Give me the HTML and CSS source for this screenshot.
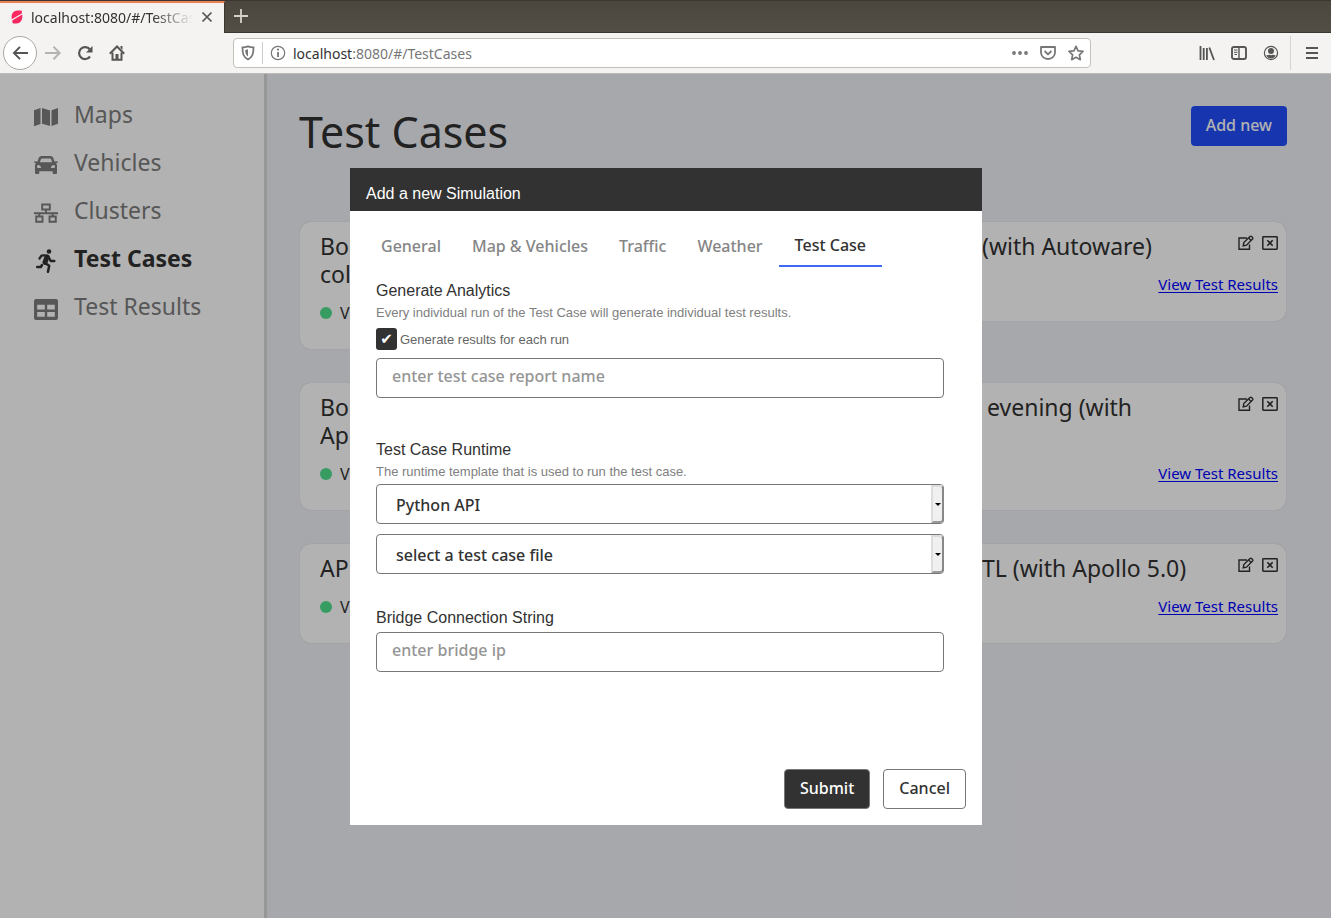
FILE: index.html
```html
<!DOCTYPE html>
<html lang="en">
<head>
<meta charset="utf-8">
<title>Test Cases</title>
<link rel="stylesheet" href="styles.css">
</head>
<body>
<svg class="defs" aria-hidden="true">
  <symbol id="edit" viewBox="0 0 18 16"><g fill="none" stroke="currentColor" stroke-width="1.4"><path d="M10 3H2v11.300h10.500V9.500"/><path d="M6.200 10.800l.6-3.300L13 1.500q.8-.7 1.600 0l.9.900q.7.800 0 1.600L9.500 10.200z"/><path d="M11.600 3l2.500 2.500"/></g></symbol>
  <symbol id="remove" viewBox="0 0 16 16"><rect x=".8" y="1.800" width="14.400" height="12.400" rx=".6" fill="none" stroke="currentColor" stroke-width="1.500"/><path d="M5.300 5.300l5.400 5.400M10.700 5.300l-5.400 5.400" fill="none" stroke="currentColor" stroke-width="1.600"/></symbol>
</svg>
<header class="browser">
  <div class="tabstrip">
    <div class="browser-tab">
      <svg class="favicon" viewBox="0 0 12 16"><path d="M.8 10.200C0 5 2 1.500 6.500 1.500q2.500-.3 4.500.3L10.800 4.500z" fill="#ff2a62"/><path d="M11.200 5.600C12 10 10 14.500 5.500 14.500q-2 .3-3.800-.3L1.200 11.600z" fill="#f5275f"/></svg>
      <span class="tab-title">localhost:8080/#/TestCases</span>
      <button class="icon-button close" aria-label="Close tab"><svg viewBox="0 0 12 12"><path d="M1.500 1.500l9 9M10.500 1.500l-9 9" fill="none" stroke="#555" stroke-width="1.700"/></svg></button>
    </div>
    <button class="icon-button plus" aria-label="New tab"><svg viewBox="0 0 14 14"><path d="M7 0v14M0 7h14" stroke="#d5d2cd" stroke-width="1.800"/></svg></button>
  </div>
  <div class="toolbar">
    <button class="icon-button back" aria-label="Back"><svg viewBox="0 0 18 16"><path d="M17 8H2M8.500 1.500L2 8l6.500 6.500" fill="none" stroke="#555" stroke-width="2"/></svg></button>
    <button class="icon-button nav" aria-label="Forward"><svg viewBox="0 0 16 16"><path d="M0 8h14.500M8.500 1.800L14.700 8l-6.200 6.200" fill="none" stroke="#b5b3b0" stroke-width="2"/></svg></button>
    <button class="icon-button nav" aria-label="Reload"><svg viewBox="0 0 16 16"><path d="M13 11.500A6 6 0 1 1 12.800 4.300" fill="none" stroke="#555" stroke-width="2.200"/><path d="M15.500 1v6.500H9z" fill="#555"/></svg></button>
    <button class="icon-button nav" aria-label="Home"><svg viewBox="0 0 16 16"><path d="M.8 8.700L8 1.500l7.200 7.200" fill="none" stroke="#555" stroke-width="2"/><path d="M3.500 7.500v7.300h9V7.500" fill="none" stroke="#555" stroke-width="2"/><path d="M6.500 15V9h3v6zM11.500 1h2v4l-2-2z" fill="#555"/></svg></button>
    <div class="address">
      <svg class="shield" viewBox="0 0 14 16"><path d="M7 1.400c2 .8 4 1 5.500 1C12.500 9 11.500 12 7 14.500 2.500 12 1.500 9 1.500 2.400c1.500 0 3.500-.2 5.500-1z" fill="none" stroke="#777" stroke-width="1.800"/><path d="M7 4.300v7.300C4.700 9.800 4.300 8 4.200 4.900z" fill="#777"/></svg>
      <i class="divider"></i>
      <svg class="info" viewBox="0 0 16 16"><circle cx="8" cy="8" r="6.700" fill="none" stroke="#777" stroke-width="1.200"/><path d="M8 7v5" stroke="#777" stroke-width="1.800"/><circle cx="8" cy="4.600" r="1.100" fill="#777"/></svg>
      <span class="url">localhost<span class="path">:8080/#/TestCases</span></span>
      <button class="icon-button" aria-label="Page actions"><svg viewBox="0 0 16 16"><g fill="#777"><circle cx="2" cy="8" r="1.900"/><circle cx="8" cy="8" r="1.900"/><circle cx="14" cy="8" r="1.900"/></g></svg></button>
      <button class="icon-button" aria-label="Save"><svg viewBox="0 0 16 16"><path d="M1 2h14v5.500a7 6.500 0 0 1-14 0zM4.600 6L8 9.400 11.400 6" fill="none" stroke="#777" stroke-width="1.800" stroke-linejoin="round"/></svg></button>
      <button class="icon-button" aria-label="Bookmark"><svg viewBox="0 0 16 16"><path d="M8 1.300l2.100 4.500 4.900.6-3.600 3.400.9 4.900L8 12.300l-4.300 2.400.9-4.900L1 6.400l4.900-.6z" fill="none" stroke="#777" stroke-width="1.700" stroke-linejoin="round"/></svg></button>
    </div>
    <div class="tools">
      <button class="icon-button" aria-label="Library"><svg viewBox="0 0 16 16"><path d="M1.500 1v14M4.700 3v12M7.900 3v12M10.300 2.500L15 15" stroke="#555" stroke-width="1.800" fill="none"/></svg></button>
      <button class="icon-button" aria-label="Sidebars"><svg viewBox="0 0 16 16"><rect x="1" y="2" width="14" height="12" rx="2" fill="none" stroke="#555" stroke-width="1.900"/><path d="M8 2v12" stroke="#555" stroke-width="1.400"/><path d="M3 5h3.500M3 7.300h3.500M3.500 9.500H6" stroke="#555"/></svg></button>
      <button class="icon-button" aria-label="Account"><svg viewBox="0 0 16 16"><circle cx="8" cy="8" r="6.600" fill="none" stroke="#555" stroke-width="1.200"/><circle cx="8" cy="6" r="3" fill="#555"/><path d="M3.300 10.300q2.400-.2 3-.5 1.700.7 3.400 0 .6.300 3 .5Q11 13.500 8 13.500t-4.700-3.200z" fill="#555"/></svg></button>
    </div>
    <button class="icon-button menu" aria-label="Menu"><svg viewBox="0 0 14 14"><path d="M1 2h12M1 7h12M1 12h12" stroke="#555" stroke-width="2"/></svg></button>
  </div>
</header>

<div class="app">
  <nav class="sidebar">
    <a href="#"><svg viewBox="0 0 24 24"><path d="M0 5.300L6.500 3v16L0 21.300zM8 3l8 2.500V21l-8-2.300zM17.500 5.300L24 3v15.700L17.500 21z" fill="currentColor"/></svg>Maps</a>
    <a href="#"><svg viewBox="0 0 24 24"><path fill-rule="evenodd" d="M7.500 3h9q2 0 2.800 2l1.200 3.500H24l-.5 1.600h-1.700Q23 11 23 12.500V20q0 1-1 1h-2.300q-1 0-1-1v-1.700H5.300V20q0 1-1 1H2q-1 0-1-1v-7.500q0-1.500 1.200-2.400H.5L0 8.500h3.500L4.700 5q.8-2 2.800-2zm.3 2.600q-.7 0-1 .8L5.900 9.300h12.200l-.9-2.900q-.3-.8-1-.8zM4.600 12q-1.700 0-1.700 1.500T4.600 15h2.600q-.7-3-2.600-3zm14.800 0q-1.900 0-2.600 3h2.600q1.700 0 1.700-1.500T19.400 12z" fill="currentColor"/></svg>Vehicles</a>
    <a href="#"><svg viewBox="0 0 24 24"><path d="M8.200 3.500h7.600v5H8.200zM2.200 15.500h6.300v5.300H2.200zM15.500 15.500h6.300v5.300h-6.300zM12 8.500v4M5.300 12.500v3M18.700 12.500v3M0 12.300h24" fill="none" stroke="currentColor" stroke-width="1.900"/></svg>Clusters</a>
    <a href="#" class="current"><svg viewBox="0 0 24 24"><circle cx="15" cy="2.500" r="2.300" fill="currentColor"/><path d="M5.500 9.500L7.500 6.700q3-.9 6 .5" fill="none" stroke="currentColor" stroke-width="2.300" stroke-linecap="round" stroke-linejoin="round"/><path d="M13 7.800l-2 5.500" fill="none" stroke="currentColor" stroke-width="5" stroke-linecap="round"/><path d="M11 14l4.200 2.800-1.200 6M14.500 8l2.200 4h3.600M8 16l-1.200 2H3.200" fill="none" stroke="currentColor" stroke-width="2.500" stroke-linecap="round" stroke-linejoin="round"/></svg>Test Cases</a>
    <a href="#"><svg viewBox="0 0 24 24"><path fill-rule="evenodd" d="M2 2h20q2 0 2 2v17q0 2-2 2H2q-2 0-2-2V4q0-2 2-2zm1.200 5.800v4.600h7.600V7.800zm10 0v4.600h7.600V7.800zm-10 7.200v4.800h7.600V15zm10 0v4.800h7.600V15z" fill="currentColor"/></svg>Test Results</a>
  </nav>
  <main class="main">
    <div class="page-head"><h1>Test Cases</h1><button class="add">Add new</button></div>
    <div class="cards">
      <article class="card"><h2>Bo<br>col</h2><div class="status"><i class="dot"></i>V</div></article>
      <article class="card far"><h2>(with Autoware)</h2><div class="actions"><button class="icon-button edit" aria-label="Edit"><svg><use href="#edit"/></svg></button><button class="icon-button" aria-label="Delete"><svg><use href="#remove"/></svg></button></div><div class="status"><a href="#">View Test Results</a></div></article>
      <article class="card"><h2>Bo<br>Ap</h2><div class="status"><i class="dot"></i>V</div></article>
      <article class="card far tall"><h2>evening (with</h2><div class="actions"><button class="icon-button edit" aria-label="Edit"><svg><use href="#edit"/></svg></button><button class="icon-button" aria-label="Delete"><svg><use href="#remove"/></svg></button></div><div class="status"><a href="#">View Test Results</a></div></article>
      <article class="card"><h2>AP</h2><div class="status"><i class="dot"></i>V</div></article>
      <article class="card far"><h2>TL (with Apollo 5.0)</h2><div class="actions"><button class="icon-button edit" aria-label="Edit"><svg><use href="#edit"/></svg></button><button class="icon-button" aria-label="Delete"><svg><use href="#remove"/></svg></button></div><div class="status"><a href="#">View Test Results</a></div></article>
    </div>
  </main>
  <div class="overlay">
    <form class="modal" role="dialog" aria-labelledby="dialog-title">
      <div class="modal-head" id="dialog-title">Add a new Simulation</div>
      <div class="tabs" role="tablist">
        <button type="button" role="tab">General</button><button type="button" role="tab">Map &amp; Vehicles</button><button type="button" role="tab">Traffic</button><button type="button" role="tab">Weather</button><button type="button" role="tab" class="active" aria-selected="true">Test Case</button>
      </div>
      <div class="fields">
        <section class="group">
          <label class="label" for="report">Generate Analytics</label>
          <p class="help">Every individual run of the Test Case will generate individual test results.</p>
          <label class="check"><input type="checkbox" checked><span>Generate results for each run</span></label>
          <input class="box" id="report" type="text" placeholder="enter test case report name">
        </section>
        <section class="group">
          <label class="label" for="runtime">Test Case Runtime</label>
          <p class="help">The runtime template that is used to run the test case.</p>
          <div class="pick"><select class="box" id="runtime"><option>Python API</option></select><i class="arrow"></i></div>
          <div class="pick"><select class="box" aria-label="Test case file"><option>select a test case file</option></select><i class="arrow"></i></div>
        </section>
        <section class="group">
          <label class="label" for="bridge">Bridge Connection String</label>
          <input class="box" id="bridge" type="text" placeholder="enter bridge ip">
        </section>
      </div>
      <div class="modal-foot"><button type="button" class="btn dark">Submit</button><button type="button" class="btn">Cancel</button></div>
    </form>
  </div>
</div>
</body>
</html>
```

FILE: styles.css
```css
* { box-sizing: border-box; }
body { margin: 0; min-height: 100vh; display: flex; flex-direction: column; font-family: "Noto Sans", sans-serif; color: #323232; }
button, input, select { font: inherit; color: inherit; }
svg { display: block; }
h1, h2, p { margin: 0; font-weight: 400; }
.defs { position: absolute; width: 0; height: 0; }
.icon-button { border: 0; padding: 0; background: none; width: 16px; height: 16px; flex: none; display: grid; place-items: center; }
.icon-button svg { width: 16px; height: 16px; }

.browser { font-size: 14px; }
.tabstrip { height: 33px; display: flex; align-items: stretch; background: linear-gradient(#4b473f, #524e45); border-top: 1px solid #3a3731; border-bottom: 1px solid #3a3731; }
.browser-tab { width: 225px; margin-bottom: -1px; display: flex; align-items: center; gap: 8px; padding: 0 11px 2px; background: #f4f3f1; border-top: 2px solid #ec7f58; border-right: 1px solid #3a3731; }
.favicon { width: 12px; height: 16px; flex: none; }
.tab-title { flex: 1; overflow: hidden; white-space: nowrap; -webkit-mask-image: linear-gradient(90deg, #000 75%, transparent); mask-image: linear-gradient(90deg, #000 75%, transparent); }
.close, .close svg { width: 12px; height: 12px; }
.plus { margin: 7px 8px; }
.plus svg { width: 14px; height: 14px; }
.toolbar { height: 41px; display: flex; align-items: center; gap: 16px; padding: 0 4px 0 3px; background: #f4f3f1; border-bottom: 1px solid #bcbab7; }
.back { width: 34px; height: 34px; border: 1px solid #aaa8a5; border-radius: 50%; background: #fff; margin-right: -8px; }
.back svg { width: 17px; }
.address { width: 858px; flex: 0 1 858px; height: 30px; margin-left: 92px; display: flex; align-items: center; gap: 12px; padding: 0 6px 0 7px; border: 1px solid #c4c1bd; border-radius: 4px; background: #fff; }
.shield { width: 14px; height: 16px; }
.divider { width: 1px; height: 22px; background: #ccc; margin: 0 -5px; }
.info { width: 16px; height: 16px; }
.url { flex: 1; margin-left: -5px; }
.path { color: #777; }
.tools { margin-left: auto; display: flex; gap: 16px; }
.menu { width: 37px; height: 34px; margin-left: -5px; padding-left: 6px; border-left: 1px solid #d5d3d0; }
.menu svg { width: 14px; height: 14px; }

.app { position: relative; flex: 1; display: flex; }
.sidebar { flex: 0 0 267px; padding: 16px 0 0 34px; border-right: 3px solid #d9d9d9; background: #fff; }
.sidebar a { display: flex; align-items: center; gap: 16px; height: 48px; font-size: 23px; color: #7d7d7d; text-decoration: none; }
.sidebar svg { width: 24px; height: 24px; flex: none; margin-top: 6px; }
.sidebar .current { color: #323232; font-weight: 700; }
.main { flex: 1; padding: 32px 45px 32px 33px; background: #f0f1f6; }
.page-head { display: flex; justify-content: space-between; align-items: flex-start; margin: 0 -1px; height: 116px; }
h1 { font-size: 43px; line-height: 52px; }
.add { height: 40px; padding: 0 15px 2px; border: 0; border-radius: 4px; background: #214dfb; color: #fff; font-size: 16px; font-weight: 500; }
.cards { display: grid; grid-template-columns: 1fr 1fr; gap: 34px 32px; align-items: start; }
.card { display: grid; grid-template-columns: 1fr auto; padding: 10px 8px 24px 20px; border-radius: 11px; background: #fff; box-shadow: 0 0 1px #bbb; }
.far { padding-left: 173px; }
.tall h2 { min-height: 56px; padding-left: 5px; }
h2 { font-size: 23px; line-height: 28px; white-space: nowrap; }
.actions { display: flex; gap: 7px; padding-top: 3px; }
.edit { width: 18px; }
.edit svg { width: 18px; }
.status { grid-column: 1 / -1; height: 24px; margin-top: 13px; display: flex; align-items: center; gap: 8px; font-size: 16px; }
.status a { margin-left: auto; padding-bottom: 2px; font-size: 15px; color: #00f; text-underline-offset: 2px; }
.dot { width: 12px; height: 12px; border-radius: 50%; background: #50e08c; }

.overlay { position: absolute; inset: 0; display: flex; justify-content: center; align-items: flex-start; padding: 94px 0 0 1px; background: rgba(0, 0, 0, .3); }
.modal { width: 632px; background: #fff; font-family: "Liberation Sans", Arial, sans-serif; }
.modal-head { height: 43px; padding: 8px 16px 0; line-height: 36px; background: #323232; color: #fff; font-size: 16px; }
.tabs { display: flex; gap: 1px; height: 56px; padding: 0 16px; align-items: flex-end; }
.tabs button { height: 44px; padding: 3px 15px 0; border: 0; border-bottom: 2px solid transparent; background: none; font: 500 16px "Noto Sans", sans-serif; color: #858585; }
.tabs .active { padding: 2px 16px 0; border-color: #3f6af5; color: #323232; }
.fields { padding: 14px 38px 0 26px; display: grid; gap: 34px; }
.group:first-child { padding-bottom: 8px; }
.label { display: block; font-size: 16px; line-height: 20px; margin-bottom: 2px; }
.help { font-size: 13px; line-height: 20px; margin-bottom: 2px; color: #808080; }
.check { display: flex; align-items: center; gap: 3px; margin: 5px 0 8px; font-size: 13px; color: #666; }
.check input { appearance: none; width: 21px; height: 22px; margin: 0; border-radius: 3px; background: #323232; display: grid; place-items: center; }
.check input::after { content: "✔"; font: 15px/20px "DejaVu Sans", sans-serif; color: #fff; }
.box { display: block; width: 100%; height: 40px; padding: 0 15px 4px; border: 1px solid #777; border-radius: 4px; background: #fff; font: 500 16px "Noto Sans", sans-serif; }
.box::placeholder { color: #959595; opacity: 1; }
select.box { appearance: none; padding: 1px 19px 0; }
.pick { position: relative; }
.pick + .pick { margin-top: 10px; }
.label + .box { margin-top: 4px; }
.arrow { position: absolute; top: 1px; right: 0; width: 13px; height: 38px; display: grid; place-items: center; border: 2px solid #ddd; border-right-color: #888; border-bottom-color: #999; border-radius: 0 4px 4px 0; background: #f0f0f0; pointer-events: none; }
.arrow::after { content: ""; border: 3px solid transparent; border-top-color: #000; border-bottom: 0; }
.modal-foot { display: flex; justify-content: flex-end; gap: 13px; padding: 97px 16px 16px; }
.btn { height: 40px; padding: 0 15px 2px; border: 1px solid #777; border-radius: 4px; background: #fff; font: 500 16px "Noto Sans", sans-serif; }
.dark { background: #323232; color: #fff; }
```
